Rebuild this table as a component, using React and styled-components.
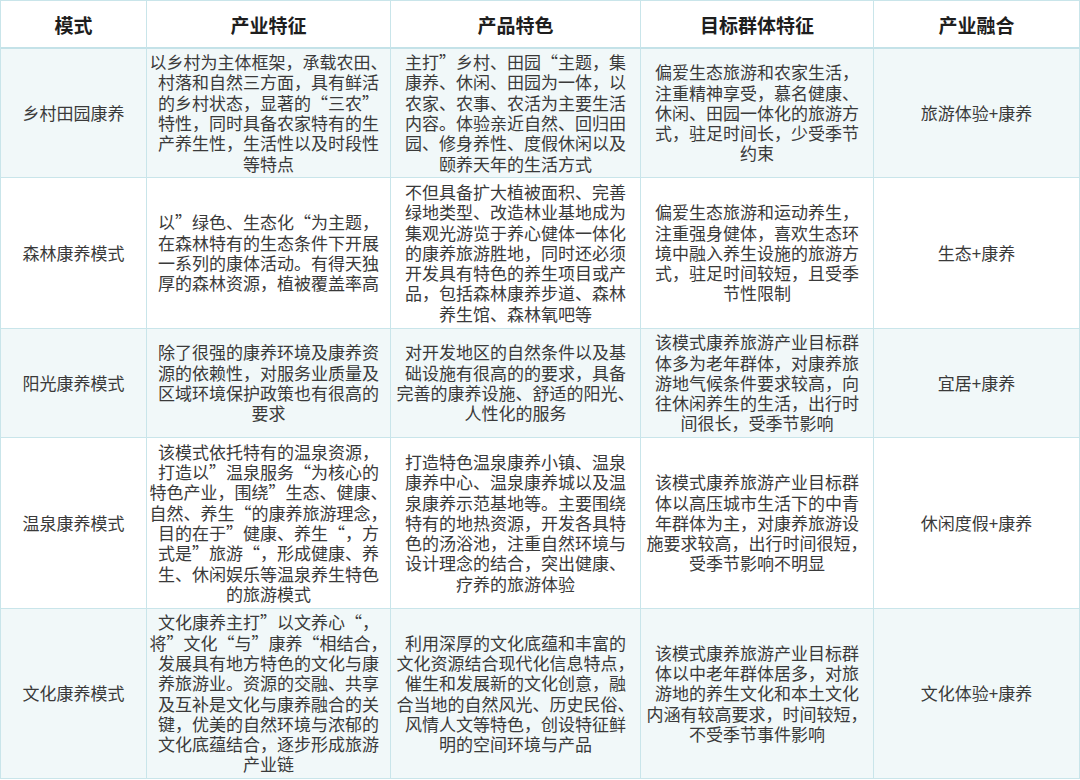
import React from "react";
import styled, { createGlobalStyle } from "styled-components";

const Global = createGlobalStyle`
  html, body { margin: 0; padding: 0; background: #ffffff; }
  body { font-family: "Noto Sans CJK SC", "Noto Sans", sans-serif; }
`;

const Table = styled.div`
  display: grid;
  width: 1080px;
  box-sizing: border-box;
  grid-template-columns: 146px 244px 250px 233px 206px;
  grid-template-rows: 48px 129px 151px 109px 171px 170px;
  border-top: 1px solid #c9e5ea;
  border-left: 1px solid #c9e5ea;
`;

const Cell = styled.div`
  box-sizing: border-box;
  display: flex;
  flex-direction: column;
  align-items: center;
  justify-content: center;
  text-align: center;
  border-right: 1px solid #c9e5ea;
  border-bottom: ${(p) => (p.$head ? "2px solid #c4e2e8" : "1px solid #c9e5ea")};
  background: ${(p) => (p.$tint ? "#f1f8f9" : "#ffffff")};
  overflow: visible;
`;

const HeadText = styled.span`
  font-size: 19px;
  font-weight: 700;
  color: #1e1e1e;
  line-height: 24px;
  margin-top: 1px;
`;

const Text = styled.p`
  margin: 0;
  white-space: pre;
  font-size: 17px;
  line-height: 20.3px;
  color: #3a3a3a;
`;

const headers = ["模式", "产业特征", "产品特色", "目标群体特征", "产业融合"];

const rows = [
  [
    ["乡村田园康养"],
    ["以乡村为主体框架，承载农田、", "村落和自然三方面，具有鲜活", "的乡村状态，显著的“三农”", "特性，同时具备农家特有的生", "产养生性，生活性以及时段性", "等特点"],
    ["主打”乡村、田园“主题，集", "康养、休闲、田园为一体，以", "农家、农事、农活为主要生活", "内容。体验亲近自然、回归田", "园、修身养性、度假休闲以及", "颐养天年的生活方式"],
    ["偏爱生态旅游和农家生活，", "注重精神享受，慕名健康、", "休闲、田园一体化的旅游方", "式，驻足时间长，少受季节", "约束"],
    ["旅游体验+康养"],
  ],
  [
    ["森林康养模式"],
    ["以”绿色、生态化“为主题，", "在森林特有的生态条件下开展", "一系列的康体活动。有得天独", "厚的森林资源，植被覆盖率高"],
    ["不但具备扩大植被面积、完善", "绿地类型、改造林业基地成为", "集观光游览于养心健体一体化", "的康养旅游胜地，同时还必须", "开发具有特色的养生项目或产", "品，包括森林康养步道、森林", "养生馆、森林氧吧等"],
    ["偏爱生态旅游和运动养生，", "注重强身健体，喜欢生态环", "境中融入养生设施的旅游方", "式，驻足时间较短，且受季", "节性限制"],
    ["生态+康养"],
  ],
  [
    ["阳光康养模式"],
    ["除了很强的康养环境及康养资", "源的依赖性，对服务业质量及", "区域环境保护政策也有很高的", "要求"],
    ["对开发地区的自然条件以及基", "础设施有很高的的要求，具备", "完善的康养设施、舒适的阳光、", "人性化的服务"],
    ["该模式康养旅游产业目标群", "体多为老年群体，对康养旅", "游地气候条件要求较高，向", "往休闲养生的生活，出行时", "间很长，受季节影响"],
    ["宜居+康养"],
  ],
  [
    ["温泉康养模式"],
    ["该模式依托特有的温泉资源，", "打造以”温泉服务“为核心的", "特色产业，围绕”生态、健康、", "自然、养生“的康养旅游理念，", "目的在于”健康、养生“，方", "式是”旅游“，形成健康、养", "生、休闲娱乐等温泉养生特色", "的旅游模式"],
    ["打造特色温泉康养小镇、温泉", "康养中心、温泉康养城以及温", "泉康养示范基地等。主要围绕", "特有的地热资源，开发各具特", "色的汤浴池，注重自然环境与", "设计理念的结合，突出健康、", "疗养的旅游体验"],
    ["该模式康养旅游产业目标群", "体以高压城市生活下的中青", "年群体为主，对康养旅游设", "施要求较高，出行时间很短，", "受季节影响不明显"],
    ["休闲度假+康养"],
  ],
  [
    ["文化康养模式"],
    ["文化康养主打”以文养心“，", "将”文化“与”康养“相结合，", "发展具有地方特色的文化与康", "养旅游业。资源的交融、共享", "及互补是文化与康养融合的关", "键，优美的自然环境与浓郁的", "文化底蕴结合，逐步形成旅游", "产业链"],
    ["利用深厚的文化底蕴和丰富的", "文化资源结合现代化信息特点，", "催生和发展新的文化创意，融", "合当地的自然风光、历史民俗、", "风情人文等特色，创设特征鲜", "明的空间环境与产品"],
    ["该模式康养旅游产业目标群", "体以中老年群体居多，对旅", "游地的养生文化和本土文化", "内涵有较高要求，时间较短，", "不受季节事件影响"],
    ["文化体验+康养"],
  ],
];

export default function App() {
  return (
    <>
      <Global />
      <Table>
        {headers.map((h) => (
          <Cell key={h} $head>
            <HeadText>{h}</HeadText>
          </Cell>
        ))}
        {rows.map((row, ri) =>
          row.map((lines, ci) => (
            <Cell key={`${ri}-${ci}`} $tint={ri % 2 === 0}>
              <Text>{lines.join("\n")}</Text>
            </Cell>
          ))
        )}
      </Table>
    </>
  );
}
